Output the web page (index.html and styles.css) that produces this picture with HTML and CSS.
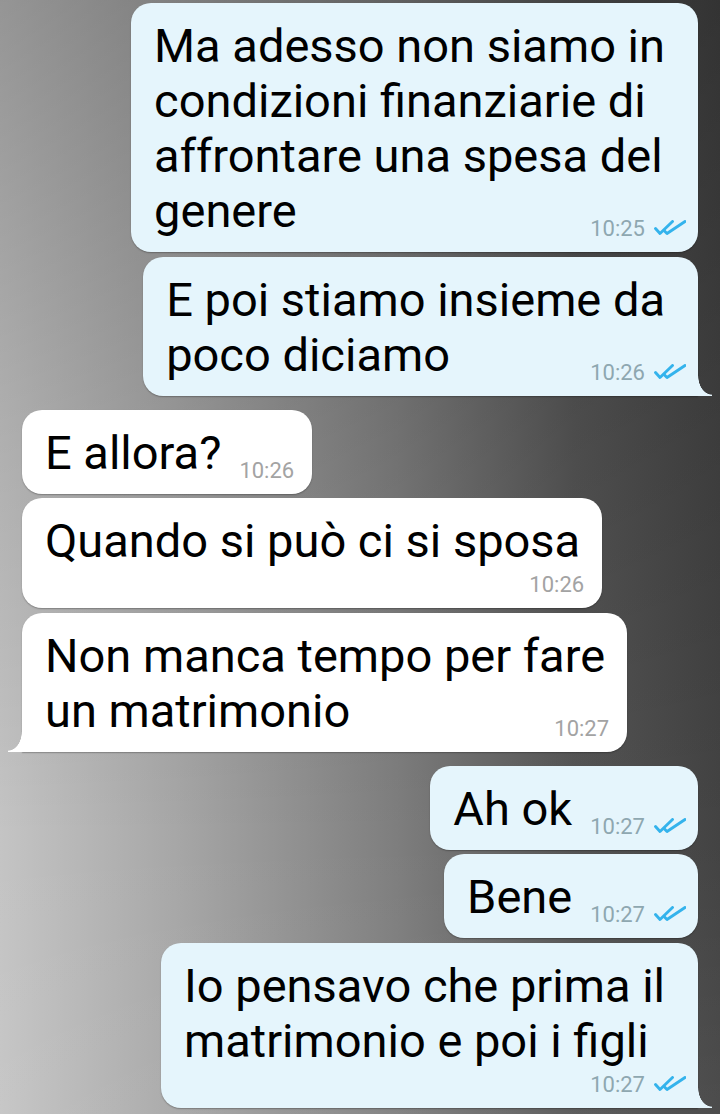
FILE: index.html
```html
<!DOCTYPE html>
<html lang="it">
<head>
<meta charset="utf-8">
<title>Chat</title>
<link rel="stylesheet" href="styles.css">
</head>
<body>
<div class="screen">
  <div class="chat">
    <div class="group out">
      <div class="bubble">Ma adesso non siamo in<br>condizioni finanziarie di<br>affrontare una spesa del<br>genere<span class="meta"><span class="time">10:25</span><svg class="ticks" viewBox="0 0 32 16" width="32" height="16"><path d="M1.5 8.5 L6 13.5 L18.5 1.5"/><path d="M10.5 11 L13 13.5 L31 1.5"/></svg></span></div>
      <div class="bubble tail">E poi stiamo insieme da<br>poco diciamo<span class="meta"><span class="time">10:26</span><svg class="ticks" viewBox="0 0 32 16" width="32" height="16"><path d="M1.5 8.5 L6 13.5 L18.5 1.5"/><path d="M10.5 11 L13 13.5 L31 1.5"/></svg></span></div>
    </div>
    <div class="group in">
      <div class="bubble">E allora?<span class="meta"><span class="time">10:26</span></span></div>
      <div class="bubble">Quando si può ci si sposa<span class="meta below"><span class="time">10:26</span></span></div>
      <div class="bubble tail">Non manca tempo per fare<br>un matrimonio<span class="meta"><span class="time">10:27</span></span></div>
    </div>
    <div class="group out">
      <div class="bubble">Ah ok<span class="meta"><span class="time">10:27</span><svg class="ticks" viewBox="0 0 32 16" width="32" height="16"><path d="M1.5 8.5 L6 13.5 L18.5 1.5"/><path d="M10.5 11 L13 13.5 L31 1.5"/></svg></span></div>
      <div class="bubble">Bene<span class="meta"><span class="time">10:27</span><svg class="ticks" viewBox="0 0 32 16" width="32" height="16"><path d="M1.5 8.5 L6 13.5 L18.5 1.5"/><path d="M10.5 11 L13 13.5 L31 1.5"/></svg></span></div>
      <div class="bubble tail">Io pensavo che prima il<br>matrimonio e poi i figli<span class="meta below"><span class="time">10:27</span><svg class="ticks" viewBox="0 0 32 16" width="32" height="16"><path d="M1.5 8.5 L6 13.5 L18.5 1.5"/><path d="M10.5 11 L13 13.5 L31 1.5"/></svg></span></div>
    </div>
  </div>
</div>
</body>
</html>
```
FILE: styles.css
```css
html, body {
  margin: 0;
  padding: 0;
}

body {
  width: 720px;
  height: 1114px;
  overflow: hidden;
  font-family: Roboto, "Noto Sans", sans-serif;
}

.screen {
  width: 720px;
  height: 1114px;
  background:
    linear-gradient(to bottom, rgba(0, 0, 0, 0.24) 0%, rgba(0, 0, 0, 0.1) 40%, rgba(0, 0, 0, 0) 75%, rgba(255, 255, 255, 0.05) 100%),
    linear-gradient(to right, #c4c4c4 0%, #a6a6a6 25%, #7e7e7e 55%, #555555 80%, #434343 100%);
}

.chat {
  display: flex;
  flex-direction: column;
  gap: 14px;
  padding: 3px 22px 0 22px;
}

.group {
  display: flex;
  flex-direction: column;
  gap: 4.5px;
}

.group.out {
  align-items: flex-end;
}

.group.in {
  align-items: flex-start;
}

.bubble {
  position: relative;
  display: flow-root;
  font-size: 47px;
  line-height: 55px;
  color: #000;
  padding: 15px 33px 10px 23px;
  border-radius: 20px;
  box-shadow: 0 1px 1.5px rgba(0, 0, 0, 0.28);
  white-space: nowrap;
}

.out .bubble {
  background: #e5f5fc;
}

.in .bubble {
  background: #ffffff;
  padding-right: 22px;
}

.meta {
  float: right;
  display: flex;
  align-items: center;
  gap: 9px;
  margin: 33px -21px 0 18px;
  height: 26px;
  font-size: 22px;
  line-height: 26px;
  color: #8ea7b0;
}

.in .meta {
  margin-right: -4px;
  color: #a3a3a3;
}

.meta.below {
  float: none;
  justify-content: flex-end;
  margin-top: 4px;
  margin-left: 0;
}

.ticks {
  width: 32px;
  height: 16px;
  margin-top: -2px;
  fill: none;
  stroke: #34b3ec;
  stroke-width: 2.9;
  stroke-linecap: round;
  stroke-linejoin: round;
}

.out .bubble.tail {
  border-bottom-right-radius: 0;
}

.out .bubble.tail::after {
  content: "";
  position: absolute;
  right: -14px;
  bottom: 0;
  width: 14px;
  height: 20px;
  background: radial-gradient(ellipse 14px 19px at 100% 0, transparent 96%, #e5f5fc 100%);
}

.in .bubble.tail {
  border-bottom-left-radius: 0;
}

.in .bubble.tail::after {
  content: "";
  position: absolute;
  left: -14px;
  bottom: 0;
  width: 14px;
  height: 20px;
  background: radial-gradient(ellipse 14px 19px at 0 0, transparent 96%, #ffffff 100%);
}
```
